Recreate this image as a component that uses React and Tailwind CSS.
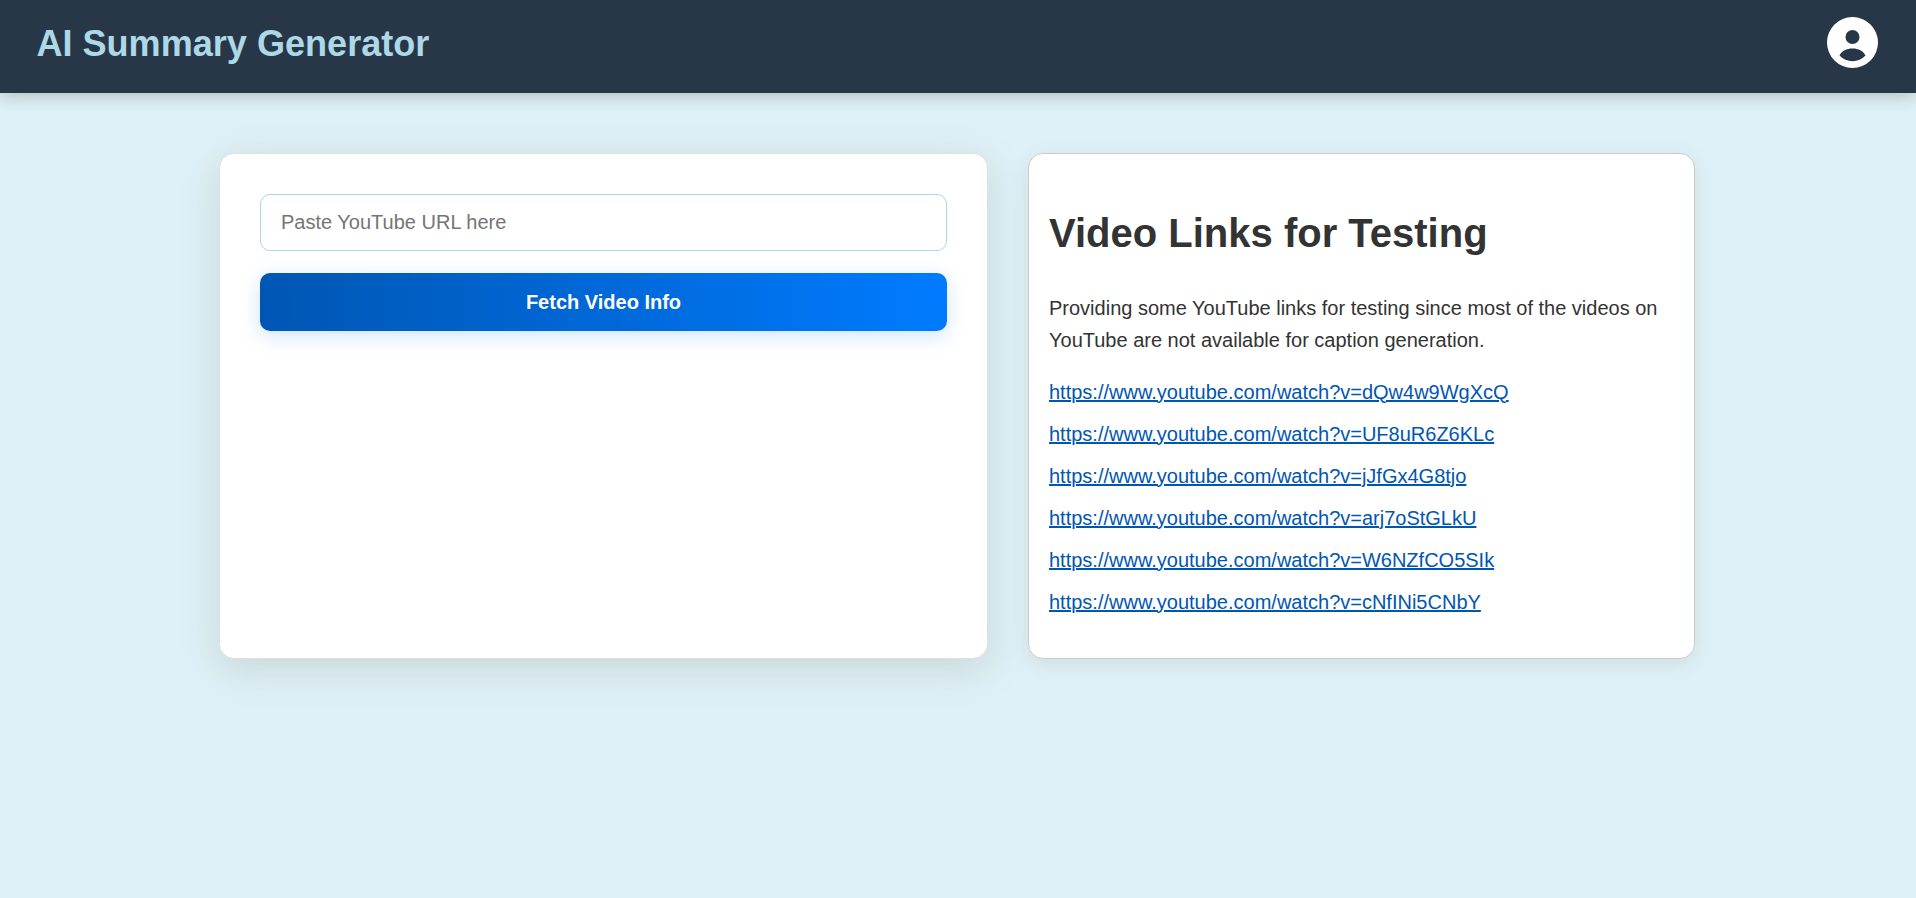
const LINKS = [
  'https://www.youtube.com/watch?v=dQw4w9WgXcQ',
  'https://www.youtube.com/watch?v=UF8uR6Z6KLc',
  'https://www.youtube.com/watch?v=jJfGx4G8tjo',
  'https://www.youtube.com/watch?v=arj7oStGLkU',
  'https://www.youtube.com/watch?v=W6NZfCO5SIk',
  'https://www.youtube.com/watch?v=cNfINi5CNbY',
];

function AvatarIcon() {
  return (
    <svg viewBox="0 0 51 51" className="size-[51px]" aria-hidden="true">
      <path
        fill="#ffffff"
        fillRule="evenodd"
        d="M25.5 0a25.5 25.5 0 1 0 0 51a25.5 25.5 0 1 0 0-51ZM25.5 13a7 7 0 1 1 0 14a7 7 0 1 1 0-14ZM12.5 38.6C14.6 33.6 19.6 31.4 25.5 31.4S36.4 33.6 38.5 38.6C35 42.4 30.5 44.2 25.5 44.2S16 42.4 12.5 38.6Z"
      />
    </svg>
  );
}

function Header() {
  return (
    <header className="flex h-[93px] items-start justify-between bg-[#283747] pr-[38.4px] pl-[36.4px] shadow-[0_4px_15px_rgba(60,60,20,0.24)]">
      <h1 className="pt-[15px] text-[36.1px] leading-[58px] font-bold text-[#add8e6]">AI Summary Generator</h1>
      <button type="button" aria-label="Account" className="mt-[16.5px]">
        <AvatarIcon />
      </button>
    </header>
  );
}

export default function App() {
  return (
    <div className="min-h-screen bg-[#dff1f8] font-['Liberation_Sans',Arial,sans-serif] text-[20px] leading-[32px] text-[#333333]">
      <Header />
      <main className="flex h-[566px] gap-[40px] pt-[60px] pl-[219px]">
        <section className="w-[769px] rounded-[15px] border border-[#e0e0e0] bg-white p-[40px] shadow-[0_10px_40px_rgba(70,70,20,0.15)]">
          <input
            type="text"
            placeholder="Paste YouTube URL here"
            className="block h-[57px] w-full rounded-[10px] border border-[#a3d8f0] px-[20px] placeholder:text-[#757575]"
          />
          <button
            type="button"
            className="mt-[21.6px] block h-[58.6px] w-full rounded-[10px] bg-linear-to-r from-[#0056b3] to-[#007bff] pt-[1px] font-bold text-white shadow-[0_5px_20px_rgba(0,123,255,0.2)]"
          >
            Fetch Video Info
          </button>
        </section>
        <section className="w-[667px] rounded-[15px] border border-[#cccccc] bg-white p-[20px] shadow-[0_5px_20px_rgba(70,70,20,0.1)]">
          <h2 className="my-[26.8px] text-[40px] leading-[64px] font-bold">Video Links for Testing</h2>
          <p className="mb-[20px]">
            Providing some YouTube links for testing since most of the videos on YouTube are not available for caption
            generation.
          </p>
          <ul className="flex flex-col gap-[10px]">
            {LINKS.map((url) => (
              <li key={url}>
                <a href={url} className="text-[#0056b3] underline">
                  {url}
                </a>
              </li>
            ))}
          </ul>
        </section>
      </main>
    </div>
  );
}
